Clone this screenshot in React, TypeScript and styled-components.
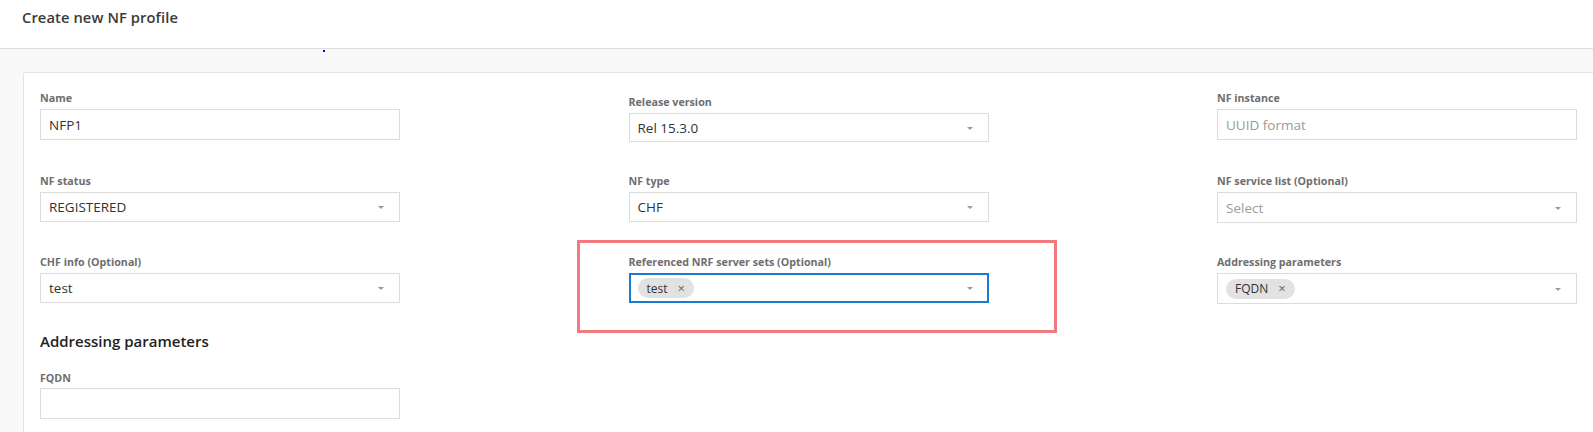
import React from "react";
import styled, { createGlobalStyle } from "styled-components";

const Global = createGlobalStyle`
  html, body { margin: 0; padding: 0; background: #ffffff; }
  body { font-family: "Open Sans", "Noto Sans", sans-serif; color: #333; }
  * { box-sizing: border-box; }
`;

const Page = styled.div`
  position: relative;
  width: 1593px;
  height: 432px;
  overflow: hidden;
`;

const Header = styled.header`
  height: 49px;
  border-bottom: 1px solid #dedede;
  padding: 7px 0 0 22px;
`;

const Title = styled.h1`
  margin: 0;
  font-size: 14.7px;
  font-weight: 600;
  color: #3a3a3a;
  letter-spacing: 0.1px;
`;

const Body = styled.main`
  background: #f9f9f9;
  padding: 23px 0 0 23px;
  height: 383px;
`;

const Card = styled.section`
  background: #fff;
  border-top: 1px solid #e3e3e3;
  border-left: 1px solid #e3e3e3;
  border-top-left-radius: 3px;
  padding: 18px 0 0 16px;
  height: 100%;
`;

const Grid = styled.div`
  display: grid;
  grid-template-columns: repeat(3, 360px);
  column-gap: 228.5px;
  row-gap: 32px;
  align-items: start;
`;

const Field = styled.div<{ $shift?: number; $gap?: number }>`
  display: flex;
  flex-direction: column;
  gap: ${(p) => p.$gap ?? 4}px;
  margin-top: ${(p) => p.$shift ?? 0}px;
`;

const Label = styled.label`
  font-size: 10.7px;
  font-weight: 700;
  color: #6e6e6e;
  line-height: 14px;
  height: 14px;
`;

const Box = styled.div<{ $focus?: boolean; $h?: number }>`
  height: ${(p) => p.$h ?? 30}px;
  border: ${(p) => (p.$focus ? "2px solid #1b7acb" : "1px solid #dcdcdc")};
  background: #fff;
  display: flex;
  align-items: center;
  padding: 0 ${(p) => (p.$focus ? 14 : 15)}px 0 ${(p) => (p.$focus ? 7 : 8)}px;
  font-size: 13.5px;
  color: #333;
`;

const Value = styled.span<{ $placeholder?: boolean }>`
  flex: 1;
  color: ${(p) => (p.$placeholder ? "#9a9a9a" : "#333")};
`;

const Arrow = styled.span`
  width: 0;
  height: 0;
  border-left: 3.5px solid transparent;
  border-right: 3.5px solid transparent;
  border-top: 3.5px solid #9a9a9a;
  margin-top: 1px;
`;

const Chips = styled.div`
  flex: 1;
  display: flex;
  gap: 4px;
`;

const Chip = styled.span`
  display: inline-flex;
  align-items: center;
  height: 20px;
  padding: 0 9px 0 9px;
  border-radius: 10px;
  background: #e2e2e2;
  font-size: 12px;
  color: #333;
  gap: 10px;
`;

const ChipX = styled.span`
  font-size: 13px;
  color: #666;
  line-height: 1;
`;

const Section = styled.h2`
  margin: 27px 0 0;
  font-size: 15px;
  font-weight: 600;
  color: #222;
  line-height: 20px;
`;

const Single = styled.div`
  width: 360px;
  margin-top: 20px;
`;

const Highlight = styled.div`
  position: absolute;
  left: 577px;
  top: 240px;
  width: 480px;
  height: 93px;
  border: 3px solid #f27a7e;
  pointer-events: none;
`;

const Dot = styled.span`
  position: absolute;
  left: 323px;
  top: 50px;
  width: 2px;
  height: 2px;
  background: #0000ff;
`;

type F = {
  label: string;
  value?: string;
  placeholder?: string;
  select?: boolean;
  chip?: string;
  focus?: boolean;
  shift?: number;
  gap?: number;
  h?: number;
};

const FormField = ({ label, value, placeholder, select, chip, focus, shift, gap, h }: F) => (
  <Field $shift={shift} $gap={gap}>
    <Label>{label}</Label>
    <Box $focus={focus} $h={h}>
      {chip ? (
        <Chips>
          <Chip>
            {chip}
            <ChipX>×</ChipX>
          </Chip>
        </Chips>
      ) : (
        <Value $placeholder={!value}>{value || placeholder}</Value>
      )}
      {select && <Arrow />}
    </Box>
  </Field>
);

export default function App() {
  return (
    <Page>
      <Global />
      <Header>
        <Title>Create new NF profile</Title>
      </Header>
      <Body>
        <Card>
          <Grid>
            <FormField label="Name" value="NFP1" h={31} />
            <FormField label="Release version" value="Rel 15.3.0" select shift={4} h={29} />
            <FormField label="NF instance" placeholder="UUID format" h={31} />
            <FormField label="NF status" value="REGISTERED" select />
            <FormField label="NF type" value="CHF" select />
            <FormField label="NF service list (Optional)" placeholder="Select" select h={31} />
            <FormField label="CHF info (Optional)" value="test" select />
            <FormField label="Referenced NRF server sets (Optional)" chip="test" select focus />
            <FormField label="Addressing parameters" chip="FQDN" select h={31} />
          </Grid>
          <Section>Addressing parameters</Section>
          <Single>
            <FormField label="FQDN" value="" h={31} gap={3} />
          </Single>
        </Card>
      </Body>
      <Highlight />
      <Dot />
    </Page>
  );
}
